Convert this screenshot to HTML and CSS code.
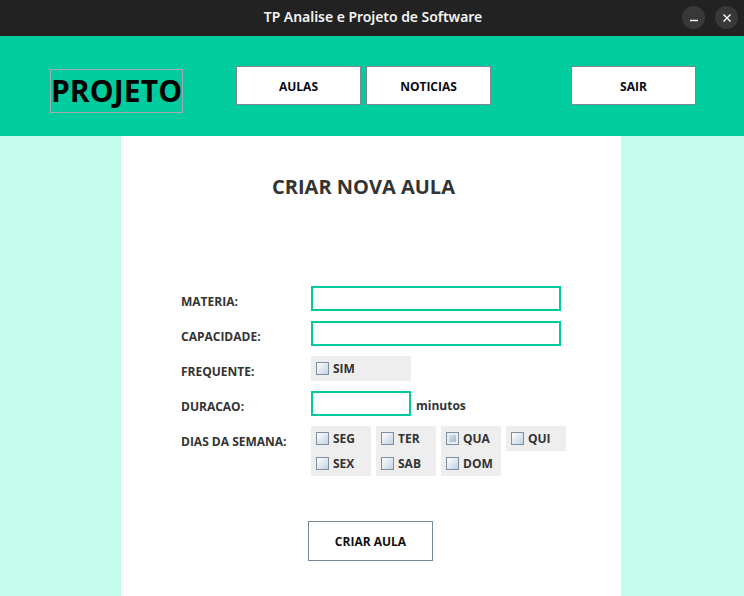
FILE: index.html
```html
<!DOCTYPE html>
<html lang="pt">
<head>
<meta charset="utf-8">
<title>TP Analise e Projeto de Software</title>
<link rel="stylesheet" href="styles.css">
</head>
<body>
<div class="titlebar">
  <span class="wtitle">TP Analise e Projeto de Software</span>
  <div class="wctrls">
    <span class="wbtn"><svg width="10" height="10" viewBox="0 0 10 10"><path d="M1 7.5h8" stroke="#fff" stroke-width="1.4"/></svg></span>
    <span class="wbtn"><svg width="10" height="10" viewBox="0 0 10 10"><path d="M1.5 1.5l7 7M8.5 1.5l-7 7" stroke="#fff" stroke-width="1.4"/></svg></span>
  </div>
</div>
<div class="header">
  <div class="logo">PROJETO</div>
  <button class="navbtn aulas">AULAS</button>
  <button class="navbtn noticias">NOTICIAS</button>
  <button class="navbtn sair">SAIR</button>
</div>
<div class="main">
  <div class="panel">
    <h1 class="ptitle">CRIAR NOVA AULA</h1>
    <div class="form">
      <label class="lbl">MATERIA:</label>
      <div class="field"><span class="input wide"></span></div>
      <label class="lbl">CAPACIDADE:</label>
      <div class="field"><span class="input wide"></span></div>
      <label class="lbl">FREQUENTE:</label>
      <div class="field"><span class="chk sim"><span class="box"></span>SIM</span></div>
      <label class="lbl">DURACAO:</label>
      <div class="field"><span class="input short"></span><span class="unit">minutos</span></div>
      <label class="lbl top">DIAS DA SEMANA:</label>
      <div class="days">
        <div class="daycol"><span class="chk"><span class="box"></span>SEG</span><span class="chk"><span class="box"></span>SEX</span></div>
        <div class="daycol"><span class="chk"><span class="box"></span>TER</span><span class="chk"><span class="box"></span>SAB</span></div>
        <div class="daycol"><span class="chk"><span class="box hot"></span>QUA</span><span class="chk"><span class="box"></span>DOM</span></div>
        <div class="daycol"><span class="chk"><span class="box"></span>QUI</span></div>
      </div>
    </div>
    <button class="submit">CRIAR AULA</button>
  </div>
</div>
</body>
</html>
```
FILE: styles.css
```css
* { box-sizing: border-box; }
html, body { margin: 0; padding: 0; }
body {
  width: 744px;
  height: 596px;
  overflow: hidden;
  font-family: "Open Sans", "Noto Sans", sans-serif;
  background: #c4fcec;
}
.titlebar {
  height: 36px;
  background: #222222;
  display: flex;
  align-items: center;
  justify-content: center;
  position: relative;
  padding-bottom: 3px;
}
.wtitle {
  color: #f2f2f2;
  font-family: "Noto Sans", "Open Sans", sans-serif;
  font-weight: 600;
  font-size: 14px;
  letter-spacing: -0.05px;
  padding-left: 2px;
}
.wctrls {
  position: absolute;
  right: 6px;
  top: 6px;
  display: flex;
  gap: 10px;
}
.wbtn {
  width: 23px;
  height: 23px;
  border-radius: 50%;
  background: #383838;
  display: flex;
  align-items: center;
  justify-content: center;
}
.header {
  height: 100px;
  background: #00cc9e;
  display: flex;
  align-items: flex-start;
  padding-left: 50px;
}
.logo {
  margin-top: 33px;
  width: 133px;
  height: 44px;
  border: 1px solid #a4aab0;
  font-weight: 700;
  font-size: 30px;
  color: #000;
  display: flex;
  align-items: center;
  justify-content: center;
  line-height: 1;
  letter-spacing: 0.1px;
}
.navbtn {
  margin-top: 30px;
  width: 125px;
  height: 39px;
  background: #fff;
  border: 1px solid #7d8794;
  font-family: "Open Sans", "Noto Sans", sans-serif;
  font-weight: 700;
  font-size: 12px;
  color: #0a0a14;
  padding: 2px 0 0 0;
}
.aulas { margin-left: 53px; }
.noticias { margin-left: 5px; }
.sair { margin-left: 80px; }
.main {
  height: 460px;
  background: #c4fcec;
  padding-left: 121px;
}
.panel {
  width: 500px;
  height: 460px;
  background: #fff;
  padding-top: 37px;
}
.ptitle {
  margin: 0;
  font-size: 20px;
  font-weight: 700;
  color: #333;
  text-align: center;
  padding-right: 15px;
  line-height: 27px;
}
.form {
  margin-top: 86px;
  margin-left: 60px;
  display: grid;
  grid-template-columns: 130px auto;
  row-gap: 10px;
}
.lbl {
  font-size: 12px;
  font-weight: 700;
  color: #333;
  height: 25px;
  display: flex;
  align-items: center;
  padding-top: 5px;
}
.lbl.top { align-self: start; padding-top: 5px; }
.field {
  height: 25px;
  display: flex;
  align-items: center;
}
.input {
  display: block;
  height: 25px;
  border: 2px solid #00cc9e;
  background: #fff;
}
.input.wide { width: 250px; }
.input.short { width: 100px; }
.unit {
  margin-left: 5px;
  font-size: 12px;
  font-weight: 700;
  color: #333;
  padding-top: 4px;
}
.chk {
  display: flex;
  align-items: center;
  height: 25px;
  padding-left: 5px;
  font-size: 12px;
  font-weight: 700;
  color: #333;
  background: #eeeeee;
}
.chk.sim { width: 100px; }
.box {
  width: 13px;
  height: 13px;
  margin-right: 4px;
  border: 1px solid #7f8fa0;
  background: linear-gradient(135deg, #ffffff 0%, #dde6ef 55%, #c3d2e2 100%);
}
.box.hot {
  background: linear-gradient(135deg, #e6edf4 0%, #b8c7d6 60%, #a7b8ca 100%);
  box-shadow: inset 0 0 0 2px #e8eef4;
}
.days {
  display: flex;
  gap: 5px;
  align-items: flex-start;
}
.daycol {
  width: 60px;
  display: flex;
  flex-direction: column;
  background: #eeeeee;
}
.daycol .chk { width: 60px; }
.submit {
  margin-top: 45px;
  margin-left: 187px;
  width: 125px;
  height: 40px;
  background: #fff;
  border: 1px solid #778899;
  font-family: "Open Sans", "Noto Sans", sans-serif;
  font-weight: 700;
  font-size: 12px;
  color: #111;
  padding: 0;
}
```
